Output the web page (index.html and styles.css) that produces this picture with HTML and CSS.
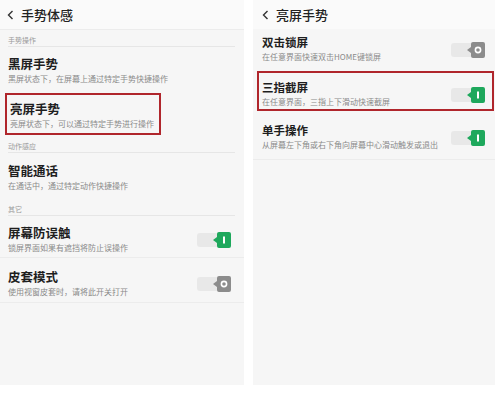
FILE: index.html
```html
<!DOCTYPE html>
<html lang="zh">
<head>
    <meta charset="UTF-8">
    <meta name="viewport" content="width=device-width, initial-scale=1.0">
    <title>手势体感</title>
    <link rel="stylesheet" href="styles.css">
</head>
<body>

    <div class="screens">
        <!-- left screen -->
        <div class="panel left">
            <div class="header">
                <svg class="back" width="7" height="10" viewBox="0 0 7 10"><polyline points="5.5,1 1.5,5 5.5,9" fill="none" stroke="#333" stroke-width="1.4"/></svg>
                <span>手势体感</span>
            </div>

            <div class="label first">手势操作</div>
            <div class="item item-a">
                <div class="text">
                    <div class="title">黑屏手势</div>
                    <div class="sub">黑屏状态下，在屏幕上通过特定手势快捷操作</div>
                </div>
            </div>
            <div class="item marked marked-left">
                <div class="text">
                    <div class="title">亮屏手势</div>
                    <div class="sub">亮屏状态下，可以通过特定手势进行操作</div>
                </div>
            </div>

            <div class="label second">动作感应</div>
            <div class="item item-b">
                <div class="text">
                    <div class="title">智能通话</div>
                    <div class="sub">在通话中，通过特定动作快捷操作</div>
                </div>
            </div>

            <div class="label third">其它</div>
            <div class="item item-c line">
                <div class="text">
                    <div class="title">屏幕防误触</div>
                    <div class="sub">锁屏界面如果有遮挡将防止误操作</div>
                </div>
                <svg class="switch" width="34" height="18" viewBox="0 0 34 18">
                    <rect x="0" y="2" width="24" height="14" rx="3" fill="#e8e8e8"/>
                    <path d="M22 1h10a2 2 0 0 1 2 2v12a2 2 0 0 1-2 2h-10a2 2 0 0 1-2-2v-3l-4-3l4-3v-3a2 2 0 0 1 2-2z" fill="#1ea85c"/>
                    <rect x="26" y="5.5" width="2" height="7" fill="#fff"/>
                </svg>
            </div>
            <div class="item item-d line">
                <div class="text">
                    <div class="title">皮套模式</div>
                    <div class="sub">使用视窗皮套时，请将此开关打开</div>
                </div>
                <svg class="switch" width="34" height="18" viewBox="0 0 34 18">
                    <rect x="0" y="2" width="24" height="14" rx="3" fill="#e8e8e8"/>
                    <path d="M22 1h10a2 2 0 0 1 2 2v12a2 2 0 0 1-2 2h-10a2 2 0 0 1-2-2v-3l-4-3l4-3v-3a2 2 0 0 1 2-2z" fill="#8c8c8c"/>
                    <circle cx="27" cy="9" r="2.6" fill="none" stroke="#fff" stroke-width="1.6"/>
                </svg>
            </div>
        </div>

        <!-- right screen -->
        <div class="panel right">
            <div class="header">
                <svg class="back" width="7" height="10" viewBox="0 0 7 10"><polyline points="5.5,1 1.5,5 5.5,9" fill="none" stroke="#333" stroke-width="1.4"/></svg>
                <span>亮屏手势</span>
            </div>

            <div class="item item-e">
                <div class="text">
                    <div class="title">双击锁屏</div>
                    <div class="sub">在任意界面快速双击HOME键锁屏</div>
                </div>
                <svg class="switch" width="34" height="18" viewBox="0 0 34 18">
                    <rect x="0" y="2" width="24" height="14" rx="3" fill="#e8e8e8"/>
                    <path d="M22 1h10a2 2 0 0 1 2 2v12a2 2 0 0 1-2 2h-10a2 2 0 0 1-2-2v-3l-4-3l4-3v-3a2 2 0 0 1 2-2z" fill="#8c8c8c"/>
                    <circle cx="27" cy="9" r="2.6" fill="none" stroke="#fff" stroke-width="1.6"/>
                </svg>
            </div>
            <div class="item marked marked-right">
                <div class="text">
                    <div class="title">三指截屏</div>
                    <div class="sub">在任意界面，三指上下滑动快速截屏</div>
                </div>
                <svg class="switch" width="34" height="18" viewBox="0 0 34 18">
                    <rect x="0" y="2" width="24" height="14" rx="3" fill="#e8e8e8"/>
                    <path d="M22 1h10a2 2 0 0 1 2 2v12a2 2 0 0 1-2 2h-10a2 2 0 0 1-2-2v-3l-4-3l4-3v-3a2 2 0 0 1 2-2z" fill="#1ea85c"/>
                    <rect x="26" y="5.5" width="2" height="7" fill="#fff"/>
                </svg>
            </div>
            <div class="item item-f line">
                <div class="text">
                    <div class="title">单手操作</div>
                    <div class="sub">从屏幕左下角或右下角向屏幕中心滑动触发或退出</div>
                </div>
                <svg class="switch" width="34" height="18" viewBox="0 0 34 18">
                    <rect x="0" y="2" width="24" height="14" rx="3" fill="#e8e8e8"/>
                    <path d="M22 1h10a2 2 0 0 1 2 2v12a2 2 0 0 1-2 2h-10a2 2 0 0 1-2-2v-3l-4-3l4-3v-3a2 2 0 0 1 2-2z" fill="#1ea85c"/>
                    <rect x="26" y="5.5" width="2" height="7" fill="#fff"/>
                </svg>
            </div>
        </div>
    </div>

</body>
</html>
```

FILE: styles.css
```css
body {
    margin: 0;
    background-color: #fff;
    font-family: "Noto Sans CJK SC", "Noto Sans", sans-serif;
    color: #222;
}
.screens {
    display: flex;
    gap: 9px;
    height: 385px;
}
.panel {
    background-color: #f6f6f6;
    height: 385px;
}
.left {
    width: 244px;
}
.right {
    flex: 1;
}
.header {
    height: 29px;
    display: flex;
    align-items: center;
    gap: 7px;
    font-size: 13px;
    font-weight: 500;
    color: #222;
    border-bottom: 1px solid #ececec;
    background-color: #fafafa;
}
.left .header {
    padding-left: 7px;
}
.right .header {
    padding-left: 9px;
    border-bottom: none;
}
.back {
    flex: none;
}

/* section labels */
.label {
    margin: 0 9px 0 8px;
    font-size: 7px;
    line-height: 10px;
    color: #999;
    border-bottom: 1px solid #e6e6e6;
}
.label.first {
    padding: 5px 0 1px;
}
.label.second {
    padding: 6px 0 1px;
}
.label.third {
    padding: 5px 0 1px;
}

/* rows */
.item {
    display: flex;
    align-items: center;
    justify-content: space-between;
    padding-left: 8px;
    padding-right: 13px;
}
.title {
    font-size: 12.5px;
    line-height: 15px;
    font-weight: 600;
    color: #1e1e1e;
}
.sub {
    font-size: 8px;
    line-height: 15px;
    color: #8a8a8a;
    white-space: nowrap;
}
.right .item {
    padding-left: 9px;
    padding-right: 10px;
}
.right .title {
    font-size: 11.5px;
}
.right .sub {
    line-height: 14px;
}
.line {
    border-bottom: 1px solid #ececec;
}
.switch {
    flex: none;
}

.item-a {
    padding-top: 9px;
    padding-bottom: 5px;
}
.item-b {
    padding-top: 10px;
    padding-bottom: 6px;
}
.item-c {
    padding-top: 9px;
    padding-bottom: 2px;
}
.item-d {
    padding-top: 11px;
    padding-bottom: 3px;
}
.right .item-e {
    padding-top: 6px;
    padding-bottom: 5px;
}
.right .item-f {
    padding-top: 12px;
    padding-bottom: 7px;
}

/* red highlight frames */
.marked {
    border: 2px solid #b0262c;
    margin-top: 2px;
}
.marked-left {
    width: 144px;
    margin-left: 5px;
    padding: 6px 5px 2px 3px;
}
.right .marked-right {
    margin-left: 4px;
    margin-right: 1px;
    padding: 7px 7px 0 3px;
}
```
